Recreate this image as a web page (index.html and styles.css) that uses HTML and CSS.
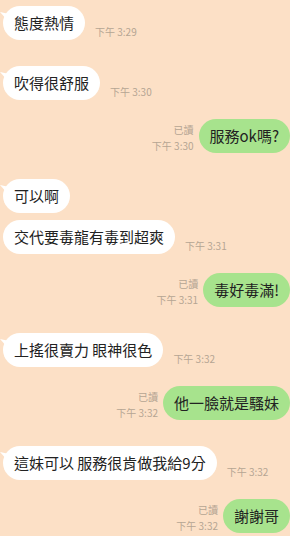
FILE: index.html
```html
<!DOCTYPE html>
<html lang="zh-Hant">
<head>
    <meta charset="UTF-8">
    <meta name="viewport" content="width=device-width, initial-scale=1.0">
    <title>聊天</title>
    <link rel="stylesheet" href="styles.css">
</head>
<body>

<div class="chat">
    <!-- 對方 -->
    <div class="row in first">
        <div class="bubble">態度熱情</div>
        <span class="time">下午 3:29</span>
    </div>
    <div class="row in first gap-l">
        <div class="bubble">吹得很舒服</div>
        <span class="time">下午 3:30</span>
    </div>

    <!-- 自己 -->
    <div class="row out gap-m">
        <div class="meta"><span class="read">已讀</span><span>下午 3:30</span></div>
        <div class="bubble">服務ok嗎?</div>
    </div>

    <div class="row in first gap-l">
        <div class="bubble">可以啊</div>
    </div>
    <div class="row in gap-s">
        <div class="bubble">交代要毒龍有毒到超爽</div>
        <span class="time">下午 3:31</span>
    </div>

    <div class="row out gap-m">
        <div class="meta"><span class="read">已讀</span><span>下午 3:31</span></div>
        <div class="bubble">毒好毒滿!</div>
    </div>

    <div class="row in first gap-l">
        <div class="bubble">上搖很賣力 眼神很色</div>
        <span class="time">下午 3:32</span>
    </div>

    <div class="row out gap-m">
        <div class="meta"><span class="read">已讀</span><span>下午 3:32</span></div>
        <div class="bubble">他一臉就是騷妹</div>
    </div>

    <div class="row in first gap-l">
        <div class="bubble">這妹可以 服務很肯做我給9分</div>
        <span class="time">下午 3:32</span>
    </div>

    <div class="row out gap-m">
        <div class="meta"><span class="read">已讀</span><span>下午 3:32</span></div>
        <div class="bubble">謝謝哥</div>
    </div>
</div>

</body>
</html>
```

FILE: styles.css
```css
body {
    margin: 0;
    background: #fce0c6;
    font-family: "Noto Sans CJK TC", "Noto Sans", sans-serif;
    overflow: hidden;
}
.chat {
    display: flex;
    flex-direction: column;
    padding: 6px 0 0 3px;
}
.row {
    display: flex;
    align-items: flex-end;
}
.row.out {
    justify-content: flex-end;
}
.gap-s {
    margin-top: 7px;
}
.gap-m {
    margin-top: 19px;
}
.gap-l {
    margin-top: 26px;
}
.bubble {
    position: relative;
    padding: 7px 11px;
    font-size: 15px;
    line-height: 20px;
    color: #222;
    border-radius: 17px;
    white-space: nowrap;
}
.in .bubble {
    background: #fff;
}
.out .bubble {
    background: #a7e38d;
}
/* little tail on the first message of a group */
.first .bubble::before {
    content: "";
    position: absolute;
    left: -3px;
    top: 6px;
    width: 8px;
    height: 9px;
    background: #fff;
    clip-path: polygon(0 0, 100% 20%, 100% 100%);
}
.time {
    font-size: 10px;
    line-height: 12px;
    color: #b5a593;
    margin: 0 0 2px 10px;
    white-space: nowrap;
}
.meta {
    display: flex;
    flex-direction: column;
    align-items: flex-end;
    font-size: 10px;
    line-height: 15px;
    color: #b5a593;
    margin-right: 5px;
    white-space: nowrap;
}
.meta .read {
    margin-bottom: 1px;
}
```
